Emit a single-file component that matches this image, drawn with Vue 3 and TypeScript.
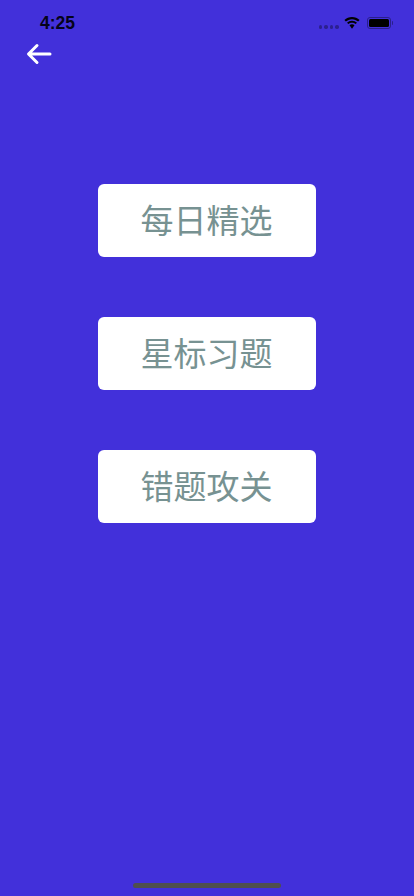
<script setup lang="ts">
const items: string[] = ['每日精选', '星标习题', '错题攻关']
</script>

<template>
  <div class="page">
    <div class="status">
      <span class="time">4:25</span>
      <div class="status-right">
        <div class="dots"><i></i><i></i><i></i><i></i></div>
        <svg class="wifi" width="16" height="12" viewBox="0 0 16 12">
          <path d="M8 2.200c2.400 0 4.500.9 6.100 2.400l1.500-1.500C13.600 1.200 10.900.1 8 .1S2.400 1.200.4 3.100l1.500 1.500C3.500 3.100 5.600 2.200 8 2.200z" fill="#000" />
          <path d="M8 5.700c1.400 0 2.600.5 3.600 1.400l1.400-1.400C11.700 4.500 9.900 3.700 8 3.700S4.300 4.500 3 5.700l1.400 1.400c1-.9 2.200-1.400 3.600-1.400z" fill="#000" />
          <path d="M8 7.300c-1 0-1.900.4-2.500.9L8 11.800l2.500-3.600C9.900 7.700 9 7.300 8 7.300z" fill="#000" />
        </svg>
        <div class="battery"><div class="level"></div></div>
        <div class="nub"></div>
      </div>
    </div>
    <div class="nav">
      <svg class="back" width="26" height="22" viewBox="0 0 26 22">
        <path d="M24 11H3M11 2.500 2.500 11l8.500 8.500" fill="none" stroke="#fff" stroke-width="3" stroke-linecap="round" stroke-linejoin="round" />
      </svg>
    </div>
    <div class="menu">
      <button v-for="item in items" :key="item" class="card" type="button">{{ item }}</button>
    </div>
    <div class="home"></div>
  </div>
</template>

<style scoped>
.page {
  width: 414px;
  height: 896px;
  background: #4230da;
  display: flex;
  flex-direction: column;
  overflow: hidden;
  font-family: "Noto Sans CJK SC", "Liberation Sans", sans-serif;
}
.status {
  height: 44px;
  box-sizing: border-box;
  padding: 12px 21px 0 40px;
  display: flex;
  justify-content: space-between;
  align-items: flex-start;
}
.time {
  font-family: "Liberation Sans", Arial, sans-serif;
  font-size: 17.500px;
  line-height: 22px;
  font-weight: 700;
  color: #05031a;
}
.status-right {
  display: flex;
  align-items: center;
  height: 22px;
}
.dots {
  display: flex;
  gap: 2px;
  margin-top: 8px;
  margin-right: 5px;
}
.dots i {
  width: 3.500px;
  height: 3.500px;
  border-radius: 50%;
  background: #2c2090;
}
.wifi {
  margin-right: 7px;
  margin-top: 0;
}
.battery {
  width: 24px;
  height: 12px;
  box-sizing: border-box;
  border: 1px solid #2a1f8c;
  border-radius: 3px;
  padding: 1px;
}
.level {
  width: 100%;
  height: 100%;
  background: #000;
  border-radius: 1.500px;
}
.nub {
  width: 1.500px;
  height: 4px;
  margin-left: 1px;
  background: #2a1f8c;
  border-radius: 0 1px 1px 0;
}
.nav {
  height: 20px;
  padding-left: 26px;
  display: flex;
  align-items: center;
}
.menu {
  margin-top: 120px;
  display: flex;
  flex-direction: column;
  align-items: center;
  gap: 60px;
}
.card {
  width: 218px;
  height: 73px;
  border: none;
  border-radius: 6px;
  background: #fff;
  color: #779292;
  font-family: inherit;
  font-size: 33px;
  font-weight: 400;
  padding: 0 1px 4px 0;
  cursor: pointer;
}
.home {
  width: 148px;
  height: 5px;
  border-radius: 3px;
  background: #4f4f4f;
  margin: auto auto 8px;
}
</style>
